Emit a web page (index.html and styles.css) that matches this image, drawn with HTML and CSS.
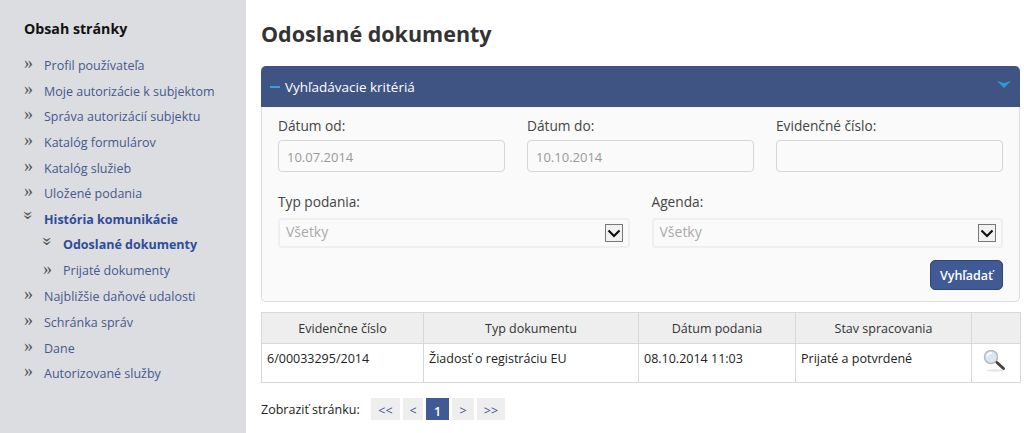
FILE: index.html
```html
<!DOCTYPE html>
<html>
  <head>
    <meta charset="utf-8">
    <title>Odoslané dokumenty</title>
    <link rel="stylesheet" href="styles.css">
  </head>
<body>
  <div class="page">
    <!-- menu -->
    <div class="sidebar">
      <h2 class="side-title">Obsah stránky</h2>
      <ul class="menu">
        <li><span class="mark">»</span><a href="#">Profil používateľa</a></li>
        <li><span class="mark">»</span><a href="#">Moje autorizácie k subjektom</a></li>
        <li><span class="mark">»</span><a href="#">Správa autorizácií subjektu</a></li>
        <li><span class="mark">»</span><a href="#">Katalóg formulárov</a></li>
        <li><span class="mark">»</span><a href="#">Katalóg služieb</a></li>
        <li><span class="mark">»</span><a href="#">Uložené podania</a></li>
        <li class="open"><span class="mark"><span class="down">»</span></span><a href="#">História komunikácie</a></li>
        <li class="sub open"><span class="mark"><span class="down">»</span></span><a href="#">Odoslané dokumenty</a></li>
        <li class="sub"><span class="mark">»</span><a href="#">Prijaté dokumenty</a></li>
        <li><span class="mark">»</span><a href="#">Najbližšie daňové udalosti</a></li>
        <li><span class="mark">»</span><a href="#">Schránka správ</a></li>
        <li><span class="mark">»</span><a href="#">Dane</a></li>
        <li><span class="mark">»</span><a href="#">Autorizované služby</a></li>
      </ul>
    </div>

    <div class="content">
      <h1 class="title">Odoslané dokumenty</h1>

      <!-- kritériá -->
      <div class="panel-head">
        <span class="dash"></span>
        <span class="panel-title">Vyhľadávacie kritériá</span>
        <svg class="chevron" width="14" height="7" viewBox="0 0 14 7"><path d="M0 0 L7 7 L14 0 L7 2 Z" fill="#2f97d6"/></svg>
      </div>
      <form class="panel-body" action="javascript:void(0);">
        <div class="row three">
          <div class="field">
            <label>Dátum od:</label>
            <input class="box" type="text" value="10.07.2014" disabled>
          </div>
          <div class="field">
            <label>Dátum do:</label>
            <input class="box" type="text" value="10.10.2014" disabled>
          </div>
          <div class="field">
            <label>Evidenčné číslo:</label>
            <input class="box" type="text" disabled>
          </div>
        </div>
        <div class="row two">
          <div class="field">
            <label>Typ podania:</label>
            <div class="select">
              <span>Všetky</span>
              <span class="arrow"><svg width="14" height="9" viewBox="0 0 14 9"><path d="M1.500 1.500 L7 7 L12.500 1.500" fill="none" stroke="#111" stroke-width="2.200"/></svg></span>
            </div>
          </div>
          <div class="field">
            <label>Agenda:</label>
            <div class="select">
              <span>Všetky</span>
              <span class="arrow"><svg width="14" height="9" viewBox="0 0 14 9"><path d="M1.500 1.500 L7 7 L12.500 1.500" fill="none" stroke="#111" stroke-width="2.200"/></svg></span>
            </div>
          </div>
        </div>
        <div class="actions">
          <button class="btn" type="button">Vyhľadať</button>
        </div>
      </form>

      <!-- výsledky -->
      <table class="results">
        <thead>
          <tr>
            <th class="c1">Evidenčne číslo</th>
            <th class="c2">Typ dokumentu</th>
            <th class="c3">Dátum podania</th>
            <th class="c4">Stav spracovania</th>
            <th></th>
          </tr>
        </thead>
        <tbody>
          <tr>
            <td>6/00033295/2014</td>
            <td>Žiadosť o registráciu EU</td>
            <td>08.10.2014 11:03</td>
            <td>Prijaté a potvrdené</td>
            <td class="view">
              <svg width="24" height="24" viewBox="0 0 24 24">
                <ellipse cx="12" cy="20.500" rx="9" ry="1.200" fill="#e4e4e4"/>
                <circle cx="8" cy="7" r="6.500" fill="#dbe6ee" stroke="#b4bcc2" stroke-width="1.500"/>
                <path d="M4 6 A4.500 4.500 0 0 1 9 3" fill="none" stroke="#fff" stroke-width="1.500"/>
                <path d="M14 12.500 L20.500 18.500" stroke="#444" stroke-width="3" stroke-linecap="round"/>
              </svg>
            </td>
          </tr>
        </tbody>
      </table>

      <div class="pager">
        <span class="pager-label">Zobraziť stránku:</span>
        <a class="pg w1" href="#">&lt;&lt;</a>
        <a class="pg w2" href="#">&lt;</a>
        <a class="pg w3 current" href="#">1</a>
        <a class="pg w4" href="#">&gt;</a>
        <a class="pg w5" href="#">&gt;&gt;</a>
      </div>
    </div>
  </div>
</body>
</html>
```
FILE: styles.css
```css
* {
    box-sizing: border-box;
}
html, body {
    margin: 0;
    padding: 0;
    height: 100%;
    overflow: hidden;
}
body {
    font-family: "Open Sans", "Noto Sans", sans-serif;
    font-size: 13px;
    color: #333;
    background: #fff;
}
.page {
    display: flex;
    height: 433px;
}
.sidebar {
    width: 246px;
    flex: none;
    background: #dcdde0;
    padding: 19px 0 0 24px;
}
.side-title {
    margin: 0 0 15px;
    font-size: 14.200px;
    line-height: 19px;
    font-weight: 700;
    color: #111;
}
.menu {
    list-style: none;
    margin: 0;
    padding: 0;
}
.menu li {
    display: flex;
    height: 25.700px;
    font-size: 12.500px;
    line-height: 25.700px;
}
.menu a {
    color: #44598f;
    text-decoration: none;
}
.mark {
    width: 20px;
    flex: none;
    font-family: "Liberation Serif", serif;
    font-size: 18px;
    line-height: 21px;
    color: #555;
}
.down {
    display: block;
    width: 9px;
    height: 21px;
    transform: rotate(90deg) translateX(-2px);
    transform-origin: 4.500px 10.500px;
}
.menu .sub {
    padding-left: 19px;
    line-height: 24.700px;
}
.menu .open a {
    color: #2f4c9a;
    font-weight: 700;
}
.content {
    flex: 1;
    min-width: 0;
    padding: 0 4px 0 15px;
}
.title {
    margin: 0;
    padding-top: 19px;
    height: 66px;
    font-size: 21.500px;
    line-height: 30px;
    font-weight: 700;
    color: #333;
}
.panel-head {
    display: flex;
    align-items: center;
    height: 41px;
    padding: 0 9px;
    background: #3f5483;
    border-radius: 5px 5px 0 0;
    color: #fff;
}
.dash {
    width: 10px;
    height: 2px;
    margin-right: 5px;
    background: #3aa0dc;
}
.panel-title {
    flex: 1;
    font-size: 13.500px;
}
.chevron {
    margin-top: -4px;
}
.panel-body {
    height: 195px;
    padding: 8px 16px 0;
    background: #fafafa;
    border: 1px solid #ddd;
    border-top: 0;
    border-radius: 0 0 5px 5px;
}
.row {
    display: grid;
    column-gap: 22px;
}
.three {
    grid-template-columns: repeat(3, 1fr);
    margin-bottom: 19px;
}
.two {
    grid-template-columns: repeat(2, 1fr);
}
.field label {
    display: block;
    height: 25px;
    padding-top: 1px;
    font-size: 13.700px;
    line-height: 20px;
    color: #444;
}
.box {
    display: block;
    width: 100%;
    height: 32px;
    padding: 2px 8px 0;
    border: 1px solid #d5d5d5;
    border-radius: 4px;
    background: #fafafa;
    font: 13px "Open Sans", sans-serif;
    color: #999;
}
.two .field label {
    height: 27px;
}
.select {
    display: flex;
    align-items: center;
    justify-content: space-between;
    height: 30px;
    padding: 0 5px 0 6px;
    border: 2px solid #efefef;
    border-radius: 4px;
    font-size: 14px;
    line-height: 18px;
    color: #aaa;
}
.select span:first-child {
    margin-top: -2px;
}
.arrow {
    display: flex;
    align-items: center;
    justify-content: center;
    width: 18px;
    height: 18px;
    background: #f2f2f2;
    border: 1px solid #777;
}
.actions {
    display: flex;
    justify-content: flex-end;
    margin-top: 12px;
}
.btn {
    width: 73px;
    height: 30px;
    padding: 0;
    background: #3f5a94;
    border: 1px solid #33476f;
    border-radius: 5px;
    color: #fff;
    font: 600 12.500px "Open Sans", sans-serif;
}
.results {
    width: 760px;
    margin-top: 10px;
    border-collapse: collapse;
    table-layout: fixed;
}
.results th, .results td {
    border: 1px solid #d8d8d8;
}
.results th {
    height: 31px;
    padding: 0;
    background: #eee;
    font-size: 12.500px;
    font-weight: 400;
    color: #333;
}
.results td {
    height: 39px;
    padding: 6px 5px 0;
    vertical-align: top;
    font-size: 12.500px;
    color: #222;
}
.results .c1 { width: 162px; }
.results .c2 { width: 215px; }
.results .c3 { width: 157px; }
.results .c4 { width: 176px; }
.results .view {
    padding: 6px 0 0 11px;
}
.pager {
    display: flex;
    align-items: center;
    height: 22px;
    margin-top: 15px;
    gap: 3px;
}
.pager-label {
    width: 107px;
    flex: none;
    font-size: 12.500px;
    color: #222;
}
.pg {
    flex: none;
    height: 22px;
    background: #eee;
    color: #41578f;
    font-size: 12.500px;
    line-height: 25px;
    text-align: center;
    text-decoration: none;
}
.w1 { width: 29px; }
.w2 { width: 20px; }
.w3 { width: 23px; }
.w4 { width: 22px; }
.w5 { width: 28px; }
.current {
    background: #3f5a94;
    color: #fff;
    font-weight: 600;
    line-height: 28px;
    overflow: hidden;
}
```
